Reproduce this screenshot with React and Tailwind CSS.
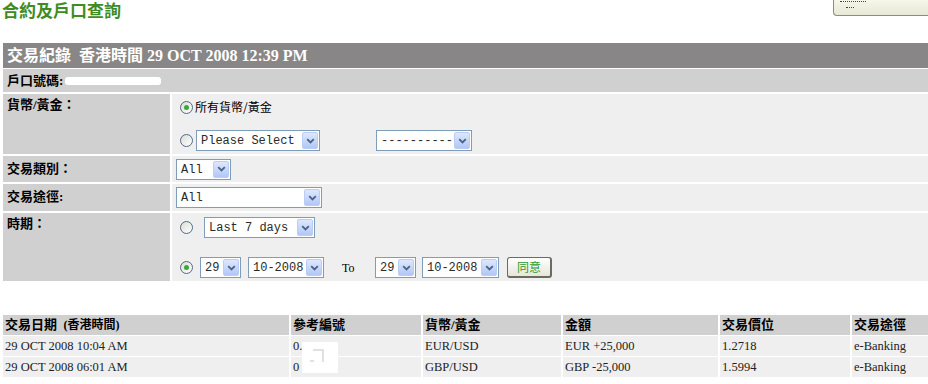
import React from "react";

const CJK = "font-['Liberation_Serif','Noto_Sans_CJK_TC',serif]";

function Sel({ className = "", text }) {
  return (
    <div className={"flex h-[21px] shrink-0 items-stretch border border-[#7f9db9] bg-white p-px " + className}>
      <span className="flex-1 overflow-hidden whitespace-pre pl-[3px] pt-px font-['Liberation_Mono',monospace] text-[12px] leading-[17px] text-[#2a2a2a]">
        {text}
      </span>
      <span className="flex w-[16px] items-center justify-center rounded-[2px] border border-[#b9cdf5] bg-linear-to-b from-[#dde8fd] to-[#b2c7f6]">
        <svg width="9" height="6" viewBox="0 0 9 6">
          <path d="M1.2 1.2 L4.5 4.4 L7.8 1.2" stroke="#4d6185" strokeWidth="1.8" fill="none" />
        </svg>
      </span>
    </div>
  );
}

function Radio({ checked }) {
  return (
    <span className="flex h-[13px] w-[13px] shrink-0 items-center justify-center rounded-full border border-[#4f6b8a] bg-linear-to-br from-[#dcdcd6] to-white">
      {checked && <span className="h-[5px] w-[5px] rounded-full bg-[#3aa83a]" />}
    </span>
  );
}

function Label({ children, className = "" }) {
  return (
    <div className={"w-[167px] shrink-0 bg-[#d0d0d0] pl-[4px] text-[13px] font-bold leading-[16px] text-black " + className}>
      {children}
    </div>
  );
}

export default function App() {
  return (
    <div className={"relative h-[384px] w-[928px] overflow-hidden bg-white " + CJK}>
      {/* title row */}
      <div className="flex h-[43px] items-start justify-between">
        <div className="pl-[2px] pt-[2px] text-[17px] font-bold leading-[20px] text-[#3f8c22]">合約及戶口查詢</div>
        <div className="flex h-[16px] w-[95px] flex-col gap-[5px] rounded-bl-[4px] border-b border-l border-[#8c8c80] bg-linear-to-b from-[#f6f6ea] to-[#e8e8d6] pl-[6px] pt-[1px]">
          <span className="h-px w-[26px] border-t border-dotted border-[#444]" />
          <span className="ml-[6px] h-px w-[8px] border-t border-dotted border-[#444]" />
        </div>
      </div>

      {/* form */}
      <div className="ml-[3px] flex flex-col">
        <div className="flex h-[25px] items-center whitespace-pre bg-[#888687] pl-[4px] text-[16px] font-bold text-white">
          交易紀錄  香港時間 29 OCT 2008 12:39 PM
        </div>
        <div className="mt-px flex h-[23px] items-center bg-[#d0d0d0] pl-[4px] text-[13px] font-bold">
          <span>戶口號碼:</span>
          <span className="ml-[2px] h-[8px] w-[96px] rounded-[3px] bg-white" />
        </div>

        <div className="mt-[2px] flex h-[60px] gap-[2px]">
          <Label className="pt-[3px]">貨幣/黃金：</Label>
          <div className="flex flex-1 flex-col bg-[#efefef] pl-[8px] pt-[5px]">
            <div className="flex h-[16px] items-center gap-[2px] text-[12px] font-normal">
              <Radio checked />
              <span className="font-['Noto_Sans_CJK_TC',sans-serif]">所有貨幣/黃金</span>
            </div>
            <div className="mt-[15px] flex items-center">
              <Radio />
              <Sel className="ml-[3px] w-[124px]" text="Please Select" />
              <Sel className="ml-[56px] w-[96px]" text="----------" />
            </div>
          </div>
        </div>

        <div className="mt-[2px] flex h-[26px] gap-[2px]">
          <Label className="pt-[5px]">交易類別：</Label>
          <div className="flex flex-1 items-center bg-[#efefef] pl-[4px]">
            <Sel className="w-[55px]" text="All" />
          </div>
        </div>

        <div className="mt-[2px] flex h-[27px] gap-[2px]">
          <Label className="pt-[5px]">交易途徑:</Label>
          <div className="flex flex-1 items-center bg-[#efefef] pl-[4px]">
            <Sel className="w-[146px]" text="All" />
          </div>
        </div>

        <div className="mt-[2px] flex h-[68px] gap-[2px]">
          <Label className="pt-[3px]">時期：</Label>
          <div className="flex flex-1 flex-col bg-[#efefef] pl-[8px] pt-[4px]">
            <div className="flex items-center">
              <Radio />
              <Sel className="ml-[11px] w-[111px]" text="Last 7 days" />
            </div>
            <div className="mt-[19px] flex items-center">
              <Radio checked />
              <Sel className="ml-[7px] w-[41px]" text="29" />
              <Sel className="ml-[7px] w-[76px]" text="10-2008" />
              <span className="ml-[18px] w-[33px] text-[12px] text-black">To</span>
              <Sel className="w-[41px]" text="29" />
              <Sel className="ml-[6px] w-[77px]" text="10-2008" />
              <div className="ml-[8px] flex h-[21px] w-[45px] items-center justify-center rounded-[3px] border border-b-2 border-r-2 border-[#6b6b5e] bg-linear-to-b from-white to-[#e6e6da] font-['Noto_Sans_CJK_TC',sans-serif] text-[12px] text-[#2a9a2a]">
                同意
              </div>
            </div>
          </div>
        </div>
      </div>

      {/* results table */}
      <div className="relative ml-[3px] mt-[34px] flex flex-col gap-px text-[12px]">
        <div className="grid h-[20px] grid-cols-[286px_130px_138px_155px_130px_1fr] gap-[2px] text-[13px] font-bold">
          <div className="flex items-center whitespace-pre bg-[#d0d0d0] pl-[2px]">交易日期  <span className="text-[12px]">(香港時間)</span></div>
          <div className="flex items-center bg-[#d0d0d0] pl-[2px]">參考編號</div>
          <div className="flex items-center bg-[#d0d0d0] pl-[2px]">貨幣/黃金</div>
          <div className="flex items-center bg-[#d0d0d0] pl-[2px]">金額</div>
          <div className="flex items-center bg-[#d0d0d0] pl-[2px]">交易價位</div>
          <div className="flex items-center bg-[#d0d0d0] pl-[2px]">交易途徑</div>
        </div>
        {[
          ["29 OCT 2008 10:04 AM", "0.", "EUR/USD", "EUR +25,000", "1.2718", "e-Banking"],
          ["29 OCT 2008 06:01 AM", "0", "GBP/USD", "GBP -25,000", "1.5994", "e-Banking"],
        ].map((r, i) => (
          <div key={i} className="grid h-[20px] grid-cols-[286px_130px_138px_155px_130px_1fr] gap-[2px] text-[#222]">
            {r.map((c, j) => (
              <div key={j} className="flex items-center bg-[#efefef] pl-[2px] font-['Liberation_Serif',serif] text-[12.5px]">
                {c}
              </div>
            ))}
          </div>
        ))}
        <div className="absolute left-[299px] top-[27px] h-[31px] w-[36px] bg-white">
          <svg width="36" height="31" viewBox="0 0 36 31">
            <path d="M11 8 H21 V20 M8 19 H12" stroke="#d8d8d8" strokeWidth="1.5" fill="none" />
          </svg>
        </div>
      </div>
    </div>
  );
}
